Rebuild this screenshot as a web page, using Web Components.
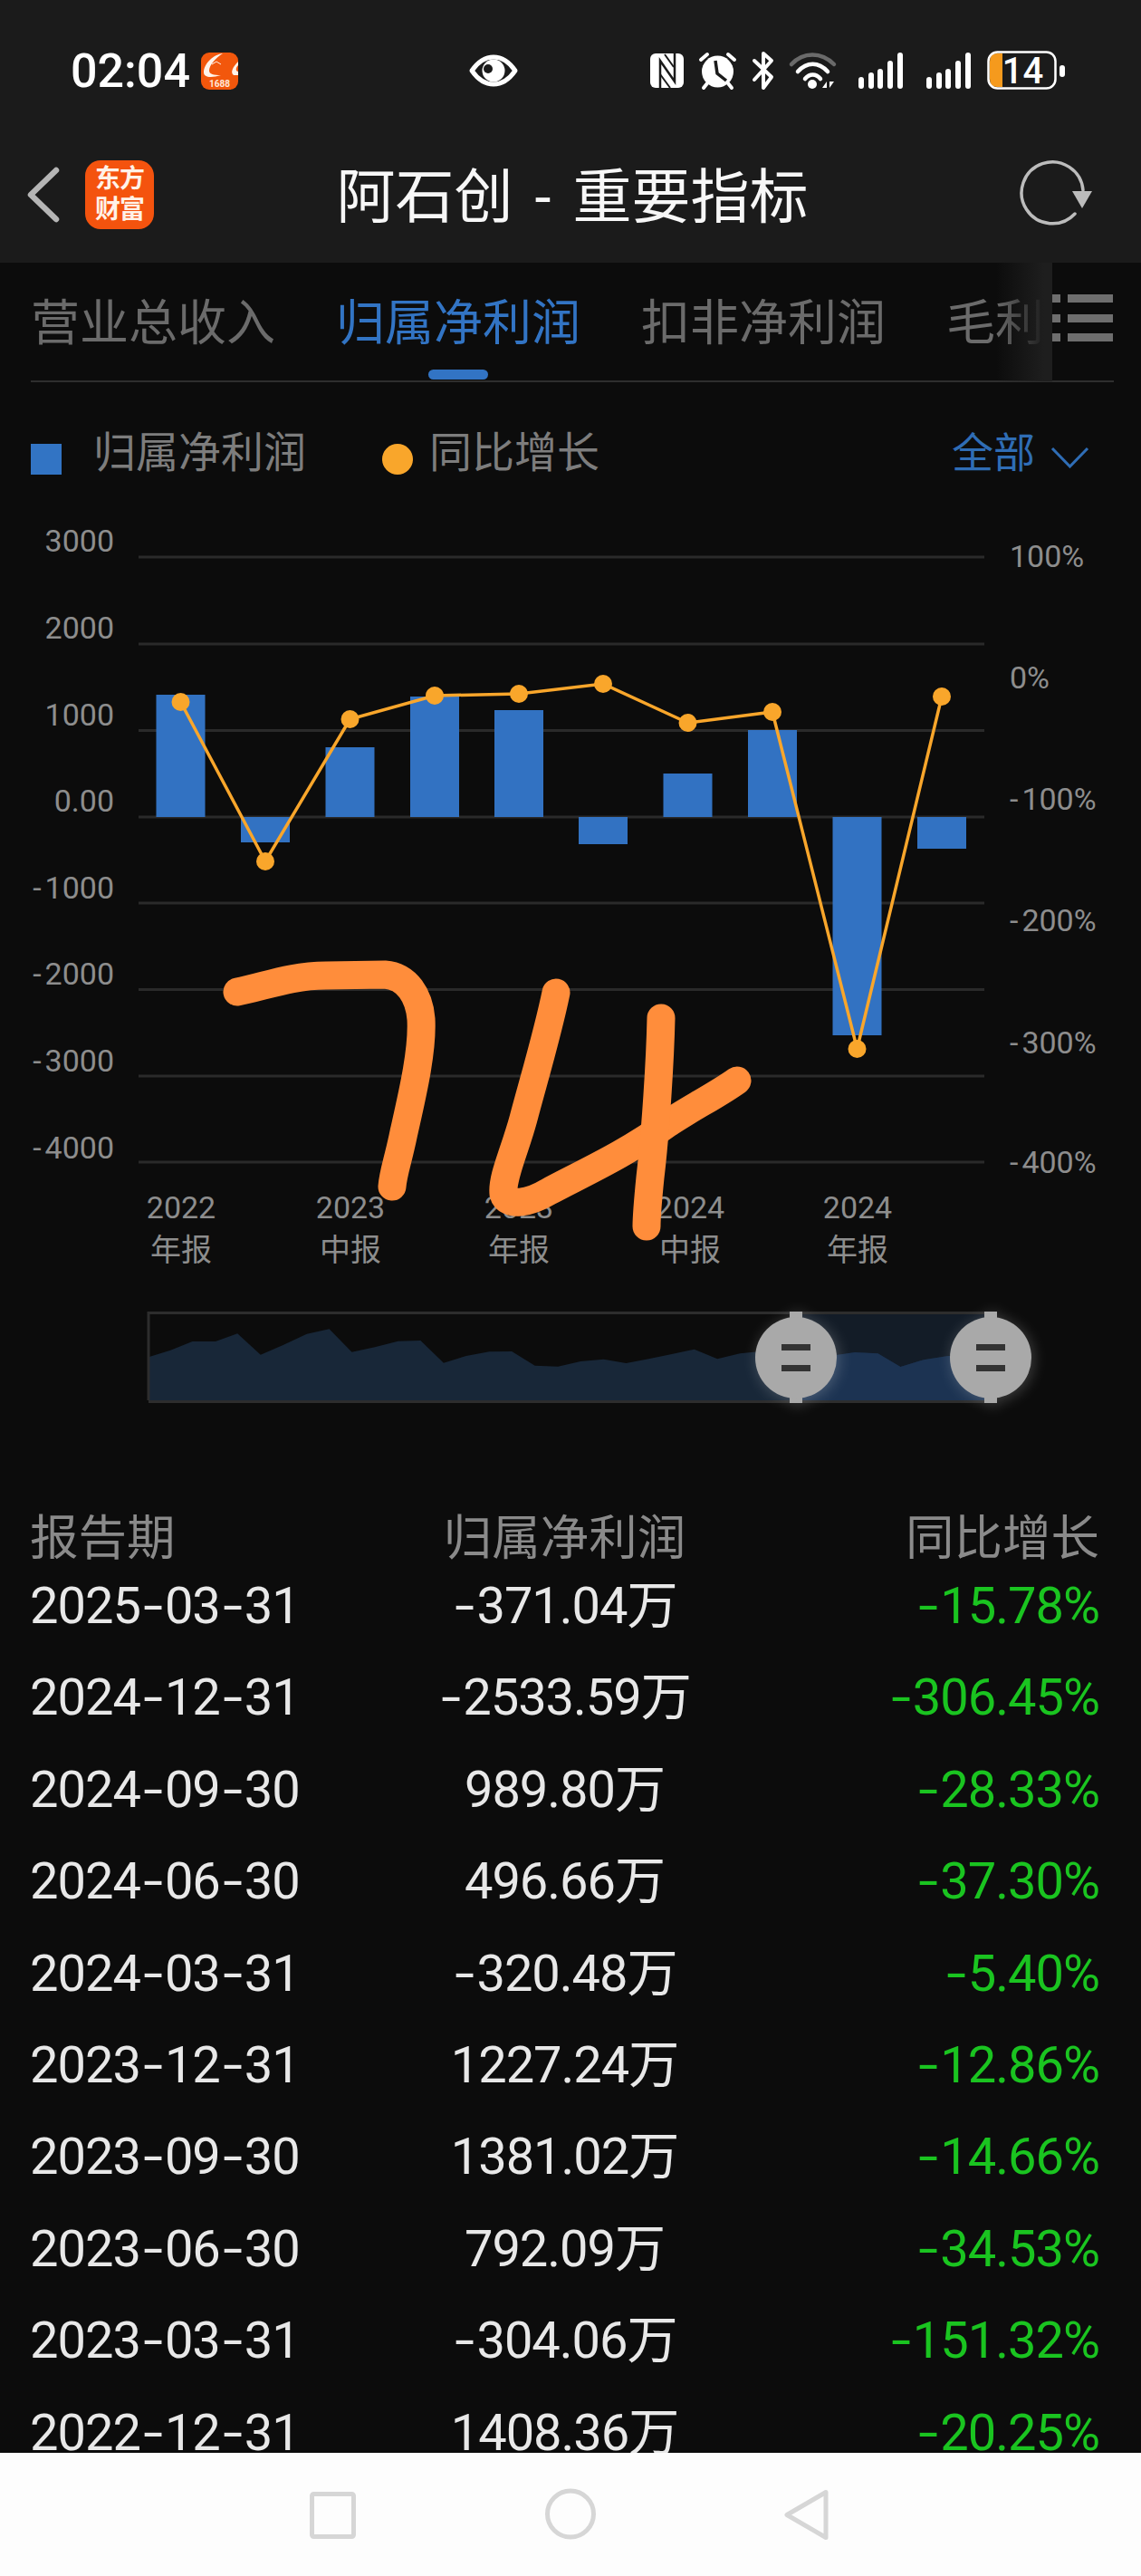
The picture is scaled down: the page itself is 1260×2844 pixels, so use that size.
<!DOCTYPE html>
<html lang="zh">
<head>
<meta charset="utf-8">
<title>阿石创 - 重要指标</title>
<style>
  html, body { margin: 0; padding: 0; background: #0c0c0c; }
  body { width: 1260px; height: 2844px; overflow: hidden; display: flex; flex-direction: column;
    font-family: Roboto, "Noto Sans CJK SC", sans-serif; }
</style>
</head>
<body>
<status-bar></status-bar>
<title-bar>阿石创 - 重要指标</title-bar>
<metric-tabs></metric-tabs>
<chart-legend></chart-legend>
<metric-chart></metric-chart>
<range-slider></range-slider>
<data-table></data-table>
<system-nav></system-nav>

<script>
const FONT = 'Roboto, "Noto Sans CJK SC", sans-serif';

class StatusBar extends HTMLElement {
  connectedCallback() {
    const bars = [[951, 85], [962, 80], [972, 76], [983, 67], [994, 58]];
    const signal = (off) => bars.map(([x, top]) =>
      `<line x1="${x + off}" y1="${top + 3}" x2="${x + off}" y2="95" stroke="#fff" stroke-width="6" stroke-linecap="round"/>`).join('');
    this.attachShadow({ mode: 'open' });
    this.shadowRoot.innerHTML = `
      <style>
        :host { display: flex; align-items: flex-start; height: 150px; box-sizing: border-box; padding: 57px 0 0 78px;
          background: #1b1b1b; color: #fff; font-family: ${FONT}; }
        .time { font-size: 52px; font-weight: 500; line-height: 44px; width: 129px; white-space: nowrap; }
        svg { display: block; height: 44px; flex: none; margin-top: -1px; overflow: visible; }
        .batt { font-size: 40px; font-weight: 500; fill: #fff; font-family: ${FONT}; }
        .mini { font-size: 10px; font-weight: 700; fill: #ffe9da; font-family: ${FONT}; }
      </style>
      <span class="time">02:04</span>
      <svg style="margin-left:15px" width="41" viewBox="222 56 41 44">
        <defs><clipPath id="ali"><rect x="222" y="58" width="41" height="41" rx="9"/></clipPath></defs>
        <g clip-path="url(#ali)">
          <rect x="222" y="58" width="41" height="41" fill="#f2570c"/>
          <path d="M246 59C236 60 225 70 225 80C225 86 234 86 244 83C236 83 231 82 231 78C231 72 238 64 246 59Z" fill="#fff3ea"/>
          <path d="M263 68C257 74 254 80 258 83L263 83L263 79C260 79 260 75 263 72Z" fill="#fff3ea"/>
          <path d="M234 71L239 68L244 71" fill="none" stroke="#fff3ea" stroke-width="1"/>
          <text class="mini" x="242.500" y="96" text-anchor="middle">1688</text>
        </g>
      </svg>
      <svg style="margin-left:255px" width="54" viewBox="518 56 54 44">
        <path d="M521 78C528 68 536 63 545 63C554 63 562 68 569 78C562 88 554 93 545 93C536 93 528 88 521 78Z" fill="none" stroke="#fff" stroke-width="5" stroke-linejoin="round"/>
        <circle cx="545" cy="78" r="12.500" fill="#fff"/>
        <circle cx="539" cy="76" r="5" fill="#1b1b1b"/>
      </svg>
      <svg style="margin-left:146px" width="37" viewBox="718 56 37 44">
        <rect x="718" y="59" width="37" height="38" rx="6" fill="#fff"/>
        <path d="M729 98V67L745 90V58" fill="none" stroke="#1b1b1b" stroke-width="2.500"/>
        <path d="M734 60L744 74M729 82L740 97" fill="none" stroke="#1b1b1b" stroke-width="2"/>
      </svg>
      <svg style="margin-left:17px" width="41" viewBox="772 56 41 44">
        <circle cx="792.500" cy="79" r="17.500" fill="#fff"/>
        <path d="M790 67L792 81L802 89" fill="none" stroke="#1b1b1b" stroke-width="3.500"/>
        <path d="M774 66L781 60M804 60L811 66M777 97L781 92M808 97L804 92" stroke="#fff" stroke-width="4" stroke-linecap="round"/>
      </svg>
      <svg style="margin-left:17px" width="25" viewBox="830 56 25 44">
        <path d="M833 67L852 85L843 97V59L852 67L833 88" fill="none" stroke="#fff" stroke-width="4" stroke-linecap="round" stroke-linejoin="round"/>
      </svg>
      <svg style="margin-left:17px" width="51" viewBox="872 56 51 44">
        <path d="M874 71C887 57 907 57 921 71" fill="none" stroke="#6a6a6a" stroke-width="4.500" stroke-linecap="round"/>
        <path d="M881 79C891 68 904 68 914 79" fill="none" stroke="#fff" stroke-width="4.500" stroke-linecap="round"/>
        <path d="M889 87C894 81 901 81 906 87" fill="none" stroke="#fff" stroke-width="4.500" stroke-linecap="round"/>
        <circle cx="897" cy="93" r="5" fill="#fff"/>
        <path d="M908 97H913V90ZM916 90H921L916 97Z" fill="#fff"/>
      </svg>
      <svg style="margin-left:25px" width="50" viewBox="948 56 50 44">${signal(0)}</svg>
      <svg style="margin-left:25px" width="50" viewBox="1023 56 50 44">${signal(75)}</svg>
      <svg style="margin-left:17px" width="86" viewBox="1090 56 86 44">
        <path d="M1093 68Q1093 59 1101 59H1107V96H1101Q1093 96 1093 87Z" fill="#f59a1d"/>
        <rect x="1091.500" y="57.500" width="74" height="40" rx="10" fill="none" stroke="#fff" stroke-width="2.500"/>
        <rect x="1170" y="72" width="6" height="13" rx="3" fill="#fff"/>
        <text class="batt" x="1129.500" y="92" text-anchor="middle">14</text>
      </svg>
    `;
  }
}
customElements.define('status-bar', StatusBar);

class TitleBar extends HTMLElement {
  connectedCallback() {
    this.attachShadow({ mode: 'open' });
    this.shadowRoot.innerHTML = `
      <style>
        :host { display: grid; grid-template-columns: 1fr auto 1fr; align-items: center; height: 140px; box-sizing: border-box;
          padding-bottom: 10px; background: #1b1b1b; font-family: ${FONT}; }
        .left { display: flex; align-items: center; padding-left: 28px; }
        .logo { width: 76px; height: 76px; margin-left: 26px; border-radius: 17px; background: #f4530e; color: #fff2e8;
          font-size: 28px; font-weight: 700; line-height: 34px; letter-spacing: -1px; text-align: center;
          display: flex; flex-direction: column; justify-content: center; }
        .title { color: #f7f7f7; font-size: 65px; line-height: 70px; white-space: nowrap; word-spacing: 8px; padding: 5px 0 0 4px; }
        .right { display: flex; justify-content: flex-end; padding-right: 50px; }
        svg { display: block; }
      </style>
      <div class="left">
        <svg width="40" height="64" viewBox="28 183 40 64">
          <path d="M62 188L34 215L62 242" fill="none" stroke="#b5b5b5" stroke-width="6.500" stroke-linecap="round" stroke-linejoin="round"/>
        </svg>
        <div class="logo"><span>东方</span><span>财富</span></div>
      </div>
      <div class="title"><slot></slot></div>
      <div class="right">
        <svg width="85" height="80" viewBox="1125 175 85 80">
          <path d="M1196 210A34 34 0 1 0 1187 236" fill="none" stroke="#bcbcbc" stroke-width="3.500" stroke-linecap="round"/>
          <path d="M1184 211H1206L1195 230Z" fill="#bcbcbc"/>
        </svg>
      </div>
    `;
  }
}
customElements.define('title-bar', TitleBar);

class MetricTabs extends HTMLElement {
  connectedCallback() {
    const tabs = ['营业总收入', '归属净利润', '扣非净利润', '毛利润'];
    this.attachShadow({ mode: 'open' });
    this.shadowRoot.innerHTML = `
      <style>
        :host { display: block; position: relative; height: 132px; box-sizing: border-box; overflow: hidden;
          background: #0c0c0c; font-family: ${FONT}; }
        .row { display: flex; gap: 67px; width: 1162px; overflow: hidden; padding-left: 34px; box-sizing: border-box; }
        .tab { position: relative; flex: none; height: 129px; line-height: 136px; font-size: 54px; color: #6b6b6b; white-space: nowrap; }
        .tab.active { color: #3274c4; }
        .tab.active::after { content: ''; position: absolute; left: 50%; bottom: 0; width: 66px; height: 11px; margin-left: -33px;
          border-radius: 6px; background: #3274c4; }
        .line { position: absolute; left: 34px; right: 30px; bottom: 0; height: 2px; background: #2e2e2e; }
        .fade { position: absolute; left: 1100px; top: 0; width: 62px; height: 131px;
          background: linear-gradient(90deg, rgba(30,30,30,0), #1e1e1e 85%); }
        .menu { position: absolute; left: 1162px; top: 35px; display: block; }
      </style>
      <div class="row">
        ${tabs.map((t, i) => `<div class="tab${i === 1 ? ' active' : ''}">${t}</div>`).join('')}
      </div>
      <div class="line"></div>
      <div class="fade"></div>
      <svg class="menu" width="68" height="52" viewBox="0 0 68 52" fill="#6e6e6e">
        <rect x="0" y="0" width="9" height="9"/><rect x="17" y="0" width="50" height="9"/>
        <rect x="0" y="22" width="9" height="9"/><rect x="17" y="22" width="50" height="9"/>
        <rect x="0" y="43" width="9" height="9"/><rect x="17" y="43" width="50" height="9"/>
      </svg>
    `;
  }
}
customElements.define('metric-tabs', MetricTabs);

class ChartLegend extends HTMLElement {
  connectedCallback() {
    this.attachShadow({ mode: 'open' });
    this.shadowRoot.innerHTML = `
      <style>
        :host { display: flex; align-items: flex-start; height: 138px; box-sizing: border-box; padding: 57px 57px 0 34px;
          background: #0c0c0c; color: #7d7d7d; font-family: ${FONT}; font-size: 47px; line-height: 42px; }
        .sq { width: 34px; height: 34px; margin: 11px 35px 0 0; background: #3274c4; flex: none; }
        .dot { width: 34px; height: 34px; margin: 11px 18px 0 84px; border-radius: 50%; background: #f9a62b; flex: none; }
        .all { margin-left: auto; color: #2f6db5; display: flex; font-size: 46px; }
        svg { display: block; margin: 14px 0 0 17px; }
      </style>
      <span class="sq"></span><span>归属净利润</span>
      <span class="dot"></span><span>同比增长</span>
      <span class="all">全部
        <svg width="43" height="24" viewBox="0 0 43 24"><path d="M2 2L21.500 22L41 2" fill="none" stroke="#2f6db5" stroke-width="3"/></svg>
      </span>
    `;
  }
}
customElements.define('chart-legend', ChartLegend);

class MetricChart extends HTMLElement {
  connectedCallback() {
    const grid = [615, 711, 806.500, 902, 997, 1092.500, 1188, 1283];
    const left = [['3000', 597], ['2000', 693], ['1000', 789], ['0.00', 884], ['-1000', 980], ['-2000', 1075], ['-3000', 1171], ['-4000', 1267]];
    const right = [['100%', 614], ['0%', 748], ['-100%', 882], ['-200%', 1016], ['-300%', 1151], ['-400%', 1283]];
    const xs = [199.500, 293, 386.500, 480, 573, 666, 759.500, 853, 946.500, 1040];
    const bars = [767, 930, 825, 769, 784, 932, 854, 806, 1143, 937];
    const line = [775, 951, 794, 768, 766, 755, 798, 786, 1158, 769];
    const ticks = [[200, '2022', '年报'], [387, '2023', '中报'], [573, '2023', '年报'], [762, '2024', '中报'], [947, '2024', '年报']];
    // the app draws a wide minus sign, so open a gap after the hyphen
    const label = (t) => t[0] === '-' ? `-<tspan dx="4">${t.slice(1)}</tspan>` : t;
    this.attachShadow({ mode: 'open' });
    this.shadowRoot.innerHTML = `
      <style>
        :host { display: block; height: 870px; background: #0c0c0c; font-family: ${FONT}; }
        svg { display: block; }
        text { fill: #8d8d8d; font-family: ${FONT}; font-size: 34px; }
      </style>
      <svg width="1260" height="870" viewBox="0 560 1260 870">
        ${grid.map(y => `<line x1="153" x2="1087" y1="${y}" y2="${y}" stroke="#2a2a2a" stroke-width="3"/>`).join('')}
        ${left.map(([t, y]) => `<text x="126" y="${y + 12}" text-anchor="end">${label(t)}</text>`).join('')}
        ${right.map(([t, y]) => `<text x="1115" y="${y + 12}">${label(t)}</text>`).join('')}
        ${ticks.map(([x, a, b]) => `<text x="${x}" y="1345" text-anchor="middle">${a}</text><text x="${x}" y="1392" text-anchor="middle">${b}</text>`).join('')}
        ${xs.map((x, i) => {
          const top = Math.min(bars[i], 902), h = Math.abs(bars[i] - 902);
          return `<rect x="${x - 27}" y="${top}" width="54" height="${h}" fill="#3272c2"/>`;
        }).join('')}
        <polyline points="${xs.map((x, i) => x + ',' + line[i]).join(' ')}" fill="none" stroke="#f9a62b" stroke-width="3.500"/>
        ${xs.map((x, i) => `<circle cx="${x}" cy="${line[i]}" r="10" fill="#f9a62b"/>`).join('')}
        <g fill="none" stroke="#ff8d3b" stroke-width="31" stroke-linecap="round" stroke-linejoin="round">
          <path d="M262 1095C290 1090 320 1077 360 1077L425 1076C450 1078 463 1100 465 1125C467 1160 455 1210 446 1250C440 1280 434 1295 433 1310"/>
          <path d="M614 1096C605 1140 590 1190 578 1235C568 1272 554 1300 556 1318C560 1333 585 1328 605 1316C640 1297 690 1275 738 1240C765 1222 790 1210 814 1193"/>
          <path d="M730 1124C729 1170 724 1250 718 1300C715 1330 714 1345 714 1354"/>
        </g>
      </svg>
    `;
  }
}
customElements.define('metric-chart', MetricChart);

class RangeSlider extends HTMLElement {
  connectedCallback() {
    const raw = [[22,205],[60,182],[98,153],[138,153],[176,127],[216,197],[255,165],[296,128],[335,112],[374,188],[414,172],[454,152],[493,150],[533,224],[572,201],[612,187],[651,186],[691,233],[731,236],[770,219],[810,212],[849,225],[888,211],[928,195],[967,179],[1007,211],[1046,193],[1085,185],[1125,190],[1165,200],[1205,200],[1245,189],[1285,193],[1324,237],[1364,214],[1404,202],[1443,195],[1480,190]];
    const pts = raw.map(([x, y]) => (150 + x / 1.568).toFixed(1) + ',' + (1430 + y / 3).toFixed(1));
    const area = `164,1546 ${pts.join(' ')} 1094,1546`;
    const handle = (x) => `
      <rect x="${x - 7}" y="1448" width="14" height="101" fill="#a9a9a9"/>
      <circle cx="${x}" cy="1499" r="45" fill="#a9a9a9"/>
      <rect x="${x - 16}" y="1484" width="32" height="7" fill="#333"/>
      <rect x="${x - 16}" y="1507" width="32" height="7" fill="#333"/>`;
    this.attachShadow({ mode: 'open' });
    this.shadowRoot.innerHTML = `
      <style>
        :host { display: block; height: 140px; background: #0c0c0c; }
        svg { display: block; overflow: visible; }
        .h { filter: drop-shadow(2px 2px 8px rgba(255,255,255,.22)); }
      </style>
      <svg width="1260" height="140" viewBox="0 1430 1260 140">
        <defs><clipPath id="sel"><rect x="879" y="1448" width="216" height="101"/></clipPath></defs>
        <rect x="879" y="1449" width="215" height="98" fill="#131c27"/>
        <polygon points="${area}" fill="#182738"/>
        <polygon points="${area}" fill="#1c3352" clip-path="url(#sel)"/>
        <path d="M164 1546V1449.500H1094M164 1547.500H1094" fill="none" stroke="#2d2d2d" stroke-width="3"/>
        <g class="h">${handle(879)}</g>
        <g class="h">${handle(1094)}</g>
      </svg>
    `;
  }
}
customElements.define('range-slider', RangeSlider);

class DataRow extends HTMLElement {
  connectedCallback() {
    // hyphens in this font are much wider than Roboto's
    const wide = (t) => t.replace(/-/g, '<span class="m">-</span>');
    this.attachShadow({ mode: 'open' });
    this.shadowRoot.innerHTML = `
      <style>
        :host { display: grid; grid-template-columns: 1fr 1fr 1fr; height: 101.400px; line-height: 101.400px;
          font-size: 56px; letter-spacing: -1px; color: #e8e8e8; white-space: nowrap; }
        .v { text-align: center; }
        .r { text-align: right; color: #1ac420; }
        .m { display: inline-block; width: 27px; text-align: center; transform: scaleX(1.4); }
      </style>
      <span>${wide(this.getAttribute('date'))}</span>
      <span class="v">${wide(this.getAttribute('value'))}</span>
      <span class="r">${wide(this.getAttribute('rate'))}</span>
    `;
  }
}
customElements.define('data-row', DataRow);

class DataTable extends HTMLElement {
  connectedCallback() {
    const rows = [
      ['2025-03-31', '-371.04万', '-15.78%'],
      ['2024-12-31', '-2533.59万', '-306.45%'],
      ['2024-09-30', '989.80万', '-28.33%'],
      ['2024-06-30', '496.66万', '-37.30%'],
      ['2024-03-31', '-320.48万', '-5.40%'],
      ['2023-12-31', '1227.24万', '-12.86%'],
      ['2023-09-30', '1381.02万', '-14.66%'],
      ['2023-06-30', '792.09万', '-34.53%'],
      ['2023-03-31', '-304.06万', '-151.32%'],
      ['2022-12-31', '1408.36万', '-20.25%'],
    ];
    this.attachShadow({ mode: 'open' });
    this.shadowRoot.innerHTML = `
      <style>
        :host { display: block; flex: 1; min-height: 0; overflow: hidden; box-sizing: border-box; padding: 105px 46px 0 33px;
          background: #0c0c0c; font-family: ${FONT}; }
        .head { display: grid; grid-template-columns: 1fr 1fr 1fr; height: 48px; line-height: 48px; font-size: 53.500px; color: #8a8a8a; }
        .head span:nth-child(2) { text-align: center; }
        .head span:nth-child(3) { text-align: right; }
      </style>
      <div class="head"><span>报告期</span><span>归属净利润</span><span>同比增长</span></div>
      ${rows.map(r => `<data-row date="${r[0]}" value="${r[1]}" rate="${r[2]}"></data-row>`).join('')}
    `;
  }
}
customElements.define('data-table', DataTable);

class SystemNav extends HTMLElement {
  connectedCallback() {
    this.attachShadow({ mode: 'open' });
    this.shadowRoot.innerHTML = `
      <style>
        :host { display: block; flex: none; height: 136px; background: #fdfdfd; }
        svg { display: block; }
      </style>
      <svg width="1260" height="136" viewBox="0 2708 1260 136" fill="none" stroke="#d6d6d6" stroke-width="5">
        <rect x="344.500" y="2753.500" width="46" height="47" rx="2"/>
        <circle cx="630" cy="2775.500" r="25.500"/>
        <path d="M912 2751.500V2801.500L869 2776.500Z" stroke-linejoin="round"/>
      </svg>
    `;
  }
}
customElements.define('system-nav', SystemNav);
</script>
</body>
</html>
